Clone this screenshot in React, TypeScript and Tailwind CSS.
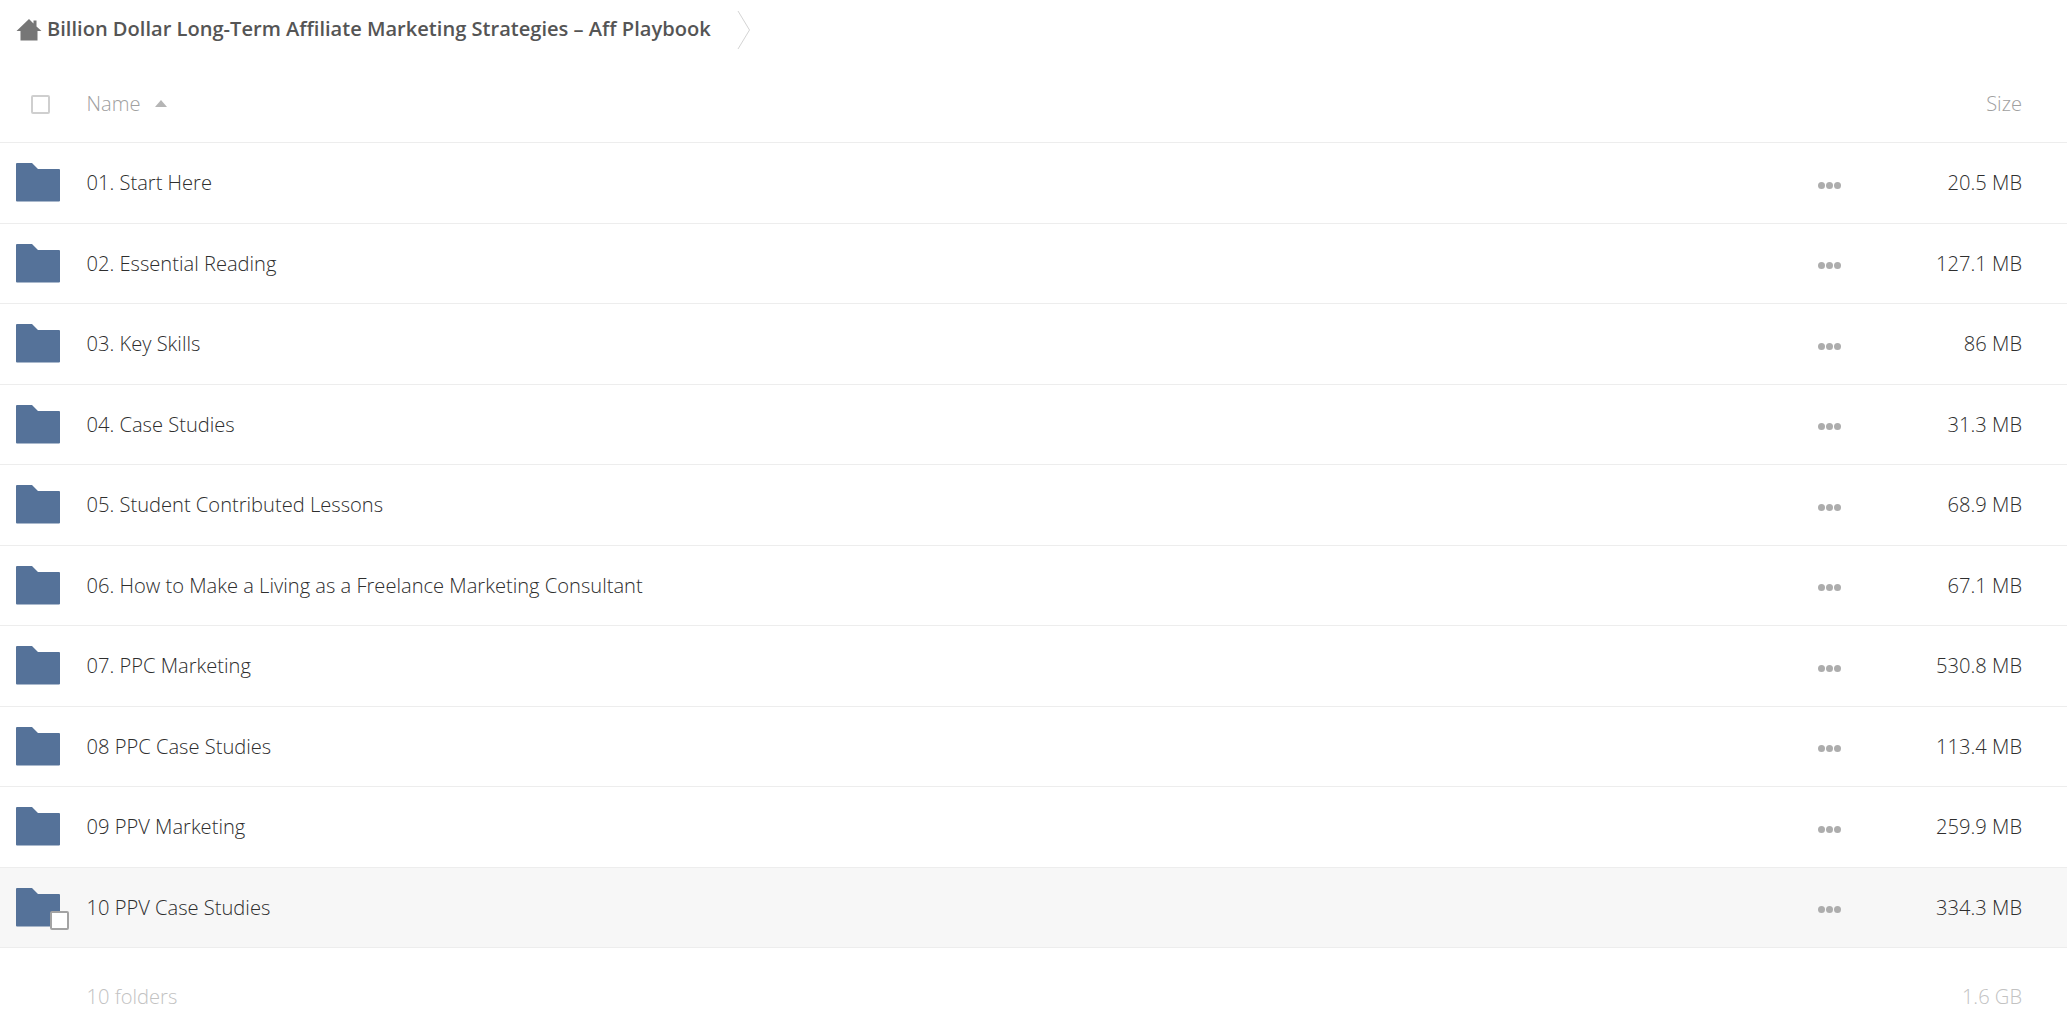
import React from "react";

interface FolderRow {
  name: string;
  size: string;
}

const folders: FolderRow[] = [
  { name: "01. Start Here", size: "20.5 MB" },
  { name: "02. Essential Reading", size: "127.1 MB" },
  { name: "03. Key Skills", size: "86 MB" },
  { name: "04. Case Studies", size: "31.3 MB" },
  { name: "05. Student Contributed Lessons", size: "68.9 MB" },
  { name: "06. How to Make a Living as a Freelance Marketing Consultant", size: "67.1 MB" },
  { name: "07. PPC Marketing", size: "530.8 MB" },
  { name: "08 PPC Case Studies", size: "113.4 MB" },
  { name: "09 PPV Marketing", size: "259.9 MB" },
  { name: "10 PPV Case Studies", size: "334.3 MB" },
];

const FolderIcon = () => (
  <svg width="44" height="39" viewBox="0 0 44 39" className="block">
    <path
      d="M1 0H16L22 6H43a1 1 0 0 1 1 1V37.5a1 1 0 0 1-1 1H1a1 1 0 0 1-1-1V1a1 1 0 0 1 1-1z"
      fill="#557299"
    />
  </svg>
);

const HomeIcon = () => (
  <svg width="26" height="24" viewBox="0 0 26 24" className="block">
    <path
      d="M13 1L17.5 5.5V2.5H20.5V8.5L25.5 13H21.5V22.5H4.5V13H0.500L13 1z"
      fill="#767676"
    />
  </svg>
);

const Dots = () => (
  <div className="flex gap-[1px]">
    <span className="w-[7px] h-[7px] rounded-full bg-[#adadad]" />
    <span className="w-[7px] h-[7px] rounded-full bg-[#adadad]" />
    <span className="w-[7px] h-[7px] rounded-full bg-[#adadad]" />
  </div>
);

const App: React.FC = () => {
  return (
    <div className="w-[2067px] h-[1033px] overflow-hidden bg-white font-['Open_Sans',sans-serif] font-light text-[20.13px]">
      <div className="h-[60px] flex items-center pl-[16px]">
        <HomeIcon />
        <span className="ml-[5px] pb-[2px] text-[20.08px] font-semibold text-[#555] whitespace-nowrap">
          Billion Dollar Long-Term Affiliate Marketing Strategies – Aff Playbook
        </span>
        <svg width="14" height="40" viewBox="0 0 14 40" className="ml-[26px]">
          <path d="M1 1L12.500 20L1 39" fill="none" stroke="#d4d4d4" strokeWidth="1" />
        </svg>
      </div>

      <div className="h-[83px] pt-[5px] flex items-center border-b border-[#ededed] text-[#a0a0a0]">
        <div className="w-[86.500px] pl-[31px] pt-[1px]">
          <div className="w-[19px] h-[19px] rounded-[2px] border-2 border-[#cfcfcf]" />
        </div>
        <span>Name</span>
        <span className="ml-[15px] w-0 h-0 border-x-[6.500px] border-x-transparent border-b-[7px] border-b-[#b5b5b5]" />
        <span className="ml-auto pr-[45px]">Size</span>
      </div>

      {folders.map((folder, i) => {
        const hovered = i === folders.length - 1;
        return (
          <div
            key={i}
            className={`h-[80.5px] flex items-center border-b border-[#ededed] text-[#2e2e2e] ${
              hovered ? "bg-[#f7f7f7]" : ""
            }`}
          >
            <div className="w-[86.500px] pl-[16px]">
              <div className="relative w-[44px]">
                <FolderIcon />
                {hovered && (
                  <div className="absolute left-[34px] top-[23px] w-[19px] h-[19px] rounded-[2px] border-2 border-[#a3a3a3] bg-white" />
                )}
              </div>
            </div>
            <span className="flex-1 pb-[1px] whitespace-nowrap">{folder.name}</span>
            <div className="w-[23px] mr-[71px] pt-[5px]">
              <Dots />
            </div>
            <span className="w-[110px] pr-[45px] pb-[1px] box-content text-right whitespace-nowrap">
              {folder.size}
            </span>
          </div>
        );
      })}

      <div className="h-[72px] pt-[24px] flex items-center justify-between text-[#c2c2c2]">
        <span className="pl-[86.500px]">10 folders</span>
        <span className="pr-[45px]">1.6 GB</span>
      </div>
    </div>
  );
};

export default App;
